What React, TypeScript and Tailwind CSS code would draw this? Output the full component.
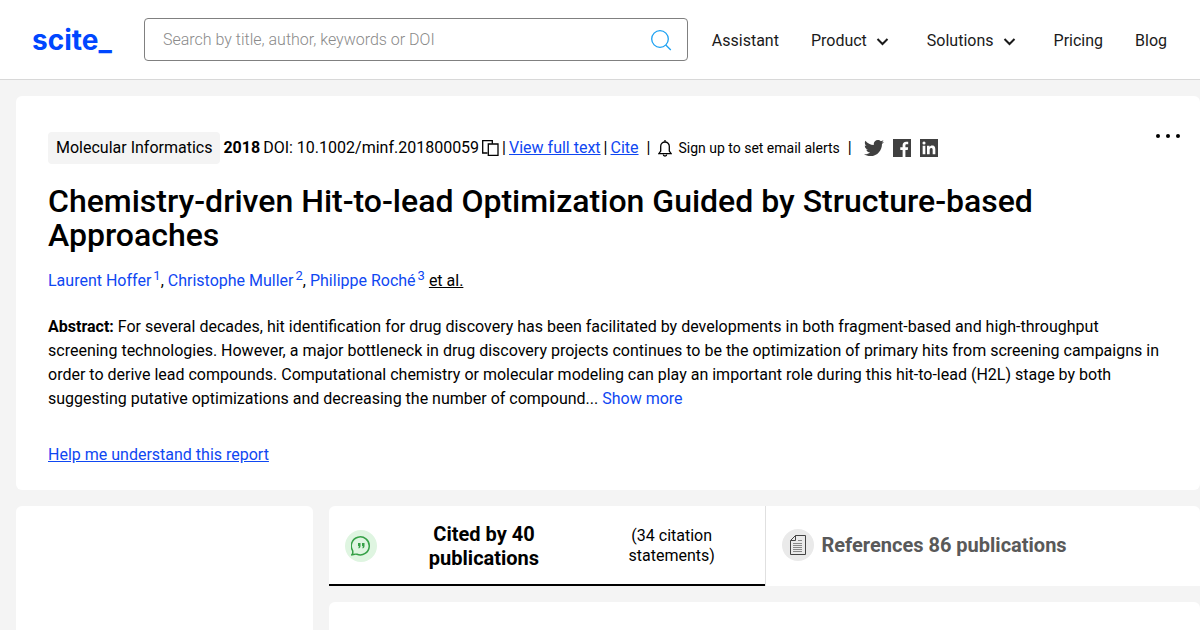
import { FaTwitter } from 'react-icons/fa'

const navLinks = [
  { label: 'Assistant', menu: false },
  { label: 'Product', menu: true },
  { label: 'Solutions', menu: true },
  { label: 'Pricing', menu: false },
  { label: 'Blog', menu: false },
]

const authors = ['Laurent Hoffer', 'Christophe Muller', 'Philippe Roché']

function ChevronIcon() {
  return (
    <svg className="size-5" viewBox="0 0 20 20" fill="none" stroke="currentColor" strokeWidth="2" aria-hidden="true">
      <path d="M2.500 8l5 5 5-5" />
    </svg>
  )
}

function SearchIcon() {
  return (
    <svg className="size-6" viewBox="0 0 24 24" fill="none" stroke="#1da1f2" strokeWidth="1.3" aria-hidden="true">
      <circle cx="11" cy="11" r="8.3" />
      <path d="M16.8 17l5 5" />
    </svg>
  )
}

function CopyIcon() {
  return (
    <svg className="h-4 w-[17px]" viewBox="0 0 17 16" fill="none" stroke="currentColor" strokeWidth="1.3" aria-hidden="true">
      <path d="M5.500 13H.7V.7h9.6v3" />
      <path d="M6.300 4h9.700v11.300H6.300z" />
    </svg>
  )
}

function BellIcon() {
  return (
    <svg className="h-[17px] w-3.5" viewBox="0 0 14 17" fill="none" stroke="currentColor" strokeWidth="1.3" aria-hidden="true">
      <path d="M7 0v2M2.7 11V6.300a4.300 4.300 0 0 1 8.600 0V11l1.900 2.700H.8L2.700 11z" />
      <path d="M5.300 14.500a1.700 1.500 0 0 0 3.400 0" />
    </svg>
  )
}

function FacebookIcon() {
  return (
    <svg className="size-[18px]" viewBox="0 0 24 24" fill="currentColor" aria-hidden="true">
      <path d="M0 0v24h12.818v-9.294H9.689v-3.621h3.129V8.41c0-3.099 1.894-4.785 4.659-4.785 1.325 0 2.464.097 2.796.141v3.24h-1.921c-1.5 0-1.792.721-1.792 1.771v2.311h3.584l-.465 3.630H16.560V24H24V0z" />
    </svg>
  )
}

function LinkedinIcon() {
  return (
    <svg className="size-[18px]" viewBox="0 0 24 24" fill="currentColor" fillRule="evenodd" aria-hidden="true">
      <path d="M0 0h24v24H0zM20.447 20.452h-3.554v-5.569c0-1.328-.027-3.037-1.852-3.037-1.853 0-2.136 1.445-2.136 2.939v5.667H9.351V9h3.414v1.561h.046c.477-.9 1.637-1.850 3.370-1.850 3.601 0 4.267 2.370 4.267 5.455v6.286zM5.337 7.433a2.062 2.062 0 0 1-2.063-2.065 2.064 2.064 0 1 1 2.063 2.065zm1.782 13.019H3.555V9h3.564v11.452z" />
    </svg>
  )
}

function QuoteIcon() {
  return (
    <svg className="size-5" viewBox="0 0 20 20" fill="none" stroke="#35a046" strokeWidth="1.5" aria-hidden="true">
      <path d="M.8 18.800c1.500-1.400 1-2.600.900-4A9 9 0 1 1 6 18.300c-1.600-.6-3.400.3-5.200.5z" />
      <path d="M7 7h2.500v3c0 1.200-.5 2-1.700 2.600l-.5-.8c.6-.4.8-.8.800-1.500H7zM11 7h2.500v3c0 1.200-.5 2-1.700 2.600l-.5-.8c.6-.4.8-.8.800-1.500H11z" fill="#35a046" stroke="none" />
    </svg>
  )
}

function DocumentIcon() {
  return (
    <svg className="h-5 w-4" viewBox="0 0 16 20" fill="none" stroke="#444" aria-hidden="true">
      <path d="M.500 5.500v14h15V.500h-10zM.500 5.500h5v-5" />
      <path d="M8 5.500h4M3 8.500h9M3 10.500h9M3 12.500h9M3 14.500h9M3 16.500h9" stroke="#888" />
    </svg>
  )
}

export default function App() {
  return (
    <div className="flex min-h-screen flex-col bg-[#f4f4f4] font-['Roboto',sans-serif] text-base text-black">
      <header className="flex h-20 items-center border-b border-[#d8d8d8] bg-white px-8 text-[#1a1a1a]">
        <a href="#" className="w-28 font-['Inter',sans-serif] text-[28px] leading-8 font-bold text-[#0047ff]">
          scite_
        </a>
        <form className="flex h-[43px] flex-1 items-center rounded-[4px] border border-[#808080] pr-3.5 pl-[18px]">
          <input
            type="text"
            aria-label="Search"
            placeholder="Search by title, author, keywords or DOI"
            className="min-w-0 flex-1 font-light outline-none placeholder:text-[#8a8a8a]"
          />
          <button type="button" aria-label="Submit search">
            <SearchIcon />
          </button>
        </form>
        <nav className="ml-6 flex items-center gap-8 pt-0.5 pr-px">
          {navLinks.map(({ label, menu }) =>
            menu ? (
              <button key={label} type="button" className="flex items-center gap-2">
                {label}
                <ChevronIcon />
              </button>
            ) : (
              <a key={label} href="#">
                {label}
              </a>
            ),
          )}
        </nav>
      </header>

      <main className="flex flex-1 flex-col gap-4 pt-4 pl-4">
        <section className="rounded-md bg-white px-8 pt-9 pb-[23px]">
          <div className="flex items-start justify-between">
            <div className="flex h-8 items-center gap-[3px]">
              <span className="rounded bg-[#f4f4f4] px-2 py-1">Molecular Informatics</span>
              <strong>2018</strong>
              <span>DOI: 10.1002/minf.201800059</span>
              <button type="button" aria-label="Copy DOI">
                <CopyIcon />
              </button>
              <span>|</span>
              <a href="#" className="text-[#0f47f2] underline">View full text</a>
              <span>|</span>
              <a href="#" className="text-[#0f47f2] underline">Cite</a>
              <span className="mx-[5px]">|</span>
              <button type="button" className="flex items-center gap-1.5 text-sm">
                <BellIcon />
                Sign up to set email alerts
              </button>
              <span className="mx-[5px]">|</span>
              <div className="ml-1 flex items-center gap-[9px] text-[#404040]">
                <a href="#" aria-label="Share on Twitter"><FaTwitter size={20} /></a>
                <a href="#" aria-label="Share on Facebook"><FacebookIcon /></a>
                <a href="#" aria-label="Share on LinkedIn"><LinkedinIcon /></a>
              </div>
            </div>
            <button type="button" aria-label="More options" className="-mr-3 flex h-2 items-center gap-1.5">
              <span className="size-1 rounded-full bg-black" />
              <span className="size-1 rounded-full bg-black" />
              <span className="size-1 rounded-full bg-black" />
            </button>
          </div>

          <h1 className="mt-5 text-[32px] leading-[34px] font-medium">
            Chemistry‐driven Hit‐to‐lead Optimization Guided by Structure‐based Approaches
          </h1>

          <p className="mt-[17px] leading-6">
            {authors.map((name, i) => (
              <span key={name}>
                <a href="#" className="text-[#0f47f2]">
                  {name}
                  <sup className="ml-0.5 text-[13px] leading-none">{i + 1}</sup>
                </a>
                {i < authors.length - 1 ? ', ' : ' '}
              </span>
            ))}
            <button type="button" className="underline">et al.</button>
          </p>

          <p className="mt-[22px] leading-6">
            <strong>Abstract:</strong> For several decades, hit identification for drug discovery has been
            facilitated by developments in both fragment‐based and high‐throughput screening technologies.
            However, a major bottleneck in drug discovery projects continues to be the optimization of primary
            hits from screening campaigns in order to derive lead compounds. Computational chemistry or
            molecular modeling can play an important role during this hit‐to‐lead (H2L) stage by both
            suggesting putative optimizations and decreasing the number of compound...{' '}
            <button type="button" className="text-[#0f47f2]">Show more</button>
          </p>

          <a href="#" className="mt-8 inline-block leading-6 text-[#0f47f2] underline">
            Help me understand this report
          </a>
        </section>

        <div className="flex flex-1 gap-4">
          <aside className="w-[297px] shrink-0 rounded-t-md bg-white" />
          <div className="flex flex-1 flex-col gap-4">
            <div className="grid h-20 grid-cols-2 rounded-t-md bg-white">
              <button type="button" className="flex items-center gap-2 border-b-2 border-black pt-0.5 pr-3 pl-4">
                <span className="flex size-8 items-center justify-center rounded-full bg-[#dff5e1]">
                  <QuoteIcon />
                </span>
                <span className="flex-[5] px-7 text-xl leading-6 font-bold">Cited by 40 publications</span>
                <span className="flex-[4] px-6 leading-5">(34 citation statements)</span>
              </button>
              <button type="button" className="flex items-center gap-2 border-l border-[#e0e0e0] px-4 pb-0.5 text-[#595959]">
                <span className="flex size-8 items-center justify-center rounded-full bg-[#eaeaea]">
                  <DocumentIcon />
                </span>
                <span className="text-xl leading-6 font-bold">References 86 publications</span>
              </button>
            </div>
            <div className="flex-1 rounded-t-md bg-white" />
          </div>
        </div>
      </main>
    </div>
  )
}
